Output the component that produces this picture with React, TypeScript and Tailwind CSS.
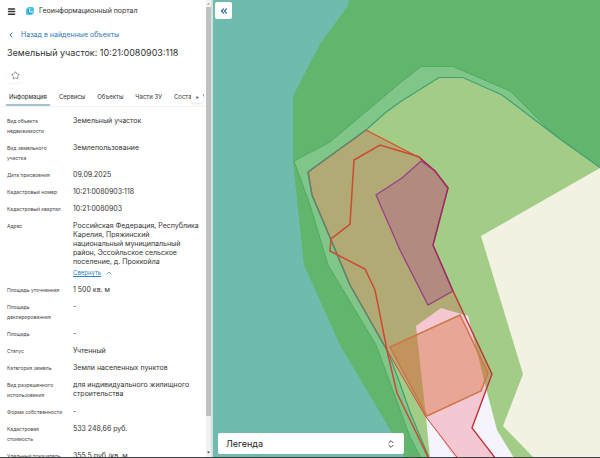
import React from 'react';
import { ChevronLeft, ChevronUp, ChevronsLeft, ChevronsUpDown, Menu, Star } from 'lucide-react';

const tabs = ['Информация', 'Сервисы', 'Объекты', 'Части ЗУ', 'Состав ЗУ'];

type Field = {
  label: string;
  value: string;
  collapsible?: boolean;
};

const fields: Field[] = [
  { label: 'Вид объекта недвижимости', value: 'Земельный участок' },
  { label: 'Вид земельного участка', value: 'Землепользование' },
  { label: 'Дата присвоения', value: '09.09.2025' },
  { label: 'Кадастровый номер', value: '10:21:0080903:118' },
  { label: 'Кадастровый квартал', value: '10:21:0080903' },
  {
    label: 'Адрес',
    value:
      'Российская Федерация, Республика Карелия, Пряжинский национальный муниципальный район, Эссойльское сельское поселение, д. Проккойла',
    collapsible: true,
  },
  { label: 'Площадь уточненная', value: '1 500 кв. м' },
  { label: 'Площадь декларированная', value: '-' },
  { label: 'Площадь', value: '-' },
  { label: 'Статус', value: 'Учтенный' },
  { label: 'Категория земель', value: 'Земли населенных пунктов' },
  { label: 'Вид разрешенного использования', value: 'для индивидуального жилищного строительства' },
  { label: 'Форма собственности', value: '-' },
  { label: 'Кадастровая стоимость', value: '533 248,66 руб.' },
  { label: 'Удельный показатель', value: '355,5 руб./кв. м' },
];

// Portal logo
function Logo() {
  return (
    <svg viewBox="0 0 16 16" className="size-2" aria-hidden="true">
      <path d="M7 0h6a3 3 0 0 1 3 3v5a8 8 0 0 1-8 8H3a3 3 0 0 1-3-3V7a7 7 0 0 1 7-7z" fill="#4fc3e8" />
      <path d="M3 9a5 5 0 0 0 5 5h3a4 4 0 0 0 3-4H7V3a5 5 0 0 0-4 6z" fill="#2b9fd6" />
      <path d="M7 3v7h7" fill="none" stroke="#e6f7fd" strokeWidth="2" />
    </svg>
  );
}

function Header() {
  return (
    <header className="flex h-[22px] items-center px-[7px]">
      <button type="button" aria-label="Меню" className="mr-2.5 text-[#333]">
        <Menu className="size-[9px]" strokeWidth={4} />
      </button>
      <Logo />
      <span className="ml-[5px] text-[7px] whitespace-nowrap">Геоинформационный портал</span>
    </header>
  );
}

function Tabs() {
  return (
    <div className="relative mt-1">
      <nav className="flex gap-1.5 border-b border-[#f0f2f4] px-1.5">
        {tabs.map((tab, i) => (
          <button
            key={tab}
            type="button"
            className={
              i === 0
                ? 'h-[19px] border-b-2 border-[#a8c2d1] px-[3px] pt-0.5 text-[6px] whitespace-nowrap text-[#222]'
                : 'h-[19px] border-b-2 border-transparent px-[3px] pt-0.5 text-[6px] whitespace-nowrap'
            }
          >
            {tab}
          </button>
        ))}
      </nav>
      <button
        type="button"
        aria-label="Следующие вкладки"
        className="absolute top-1 right-[3px] flex size-3 items-center justify-center rounded-sm bg-white shadow-sm"
      >
        <svg viewBox="0 0 4 4" className="size-[3px]" aria-hidden="true">
          <path d="M0.5 0L4 2L0.5 4Z" fill="#3f6f95" />
        </svg>
      </button>
    </div>
  );
}

function FieldRow({ field }: { field: Field }) {
  return (
    <div className="flex">
      <dt className="w-[66px] shrink-0 pr-2 text-[5px] leading-[10px] text-[#444]">{field.label}</dt>
      <dd className="min-w-0 flex-1 pr-1.5 text-[7px] leading-[9px]">
        {field.value}
        {field.collapsible && (
          <button type="button" className="mt-0.5 flex items-center gap-1 text-[6px] leading-[10px] text-[#2b7fc4]">
            <span className="underline">Свернуть</span>
            <ChevronUp className="size-2" />
          </button>
        )}
      </dd>
    </div>
  );
}

function Scrollbar() {
  return (
    <div className="flex w-[5px] shrink-0 flex-col items-center bg-[#f1f1f1]" aria-hidden="true">
      <svg viewBox="0 0 5 7" className="h-[7px] w-[5px]">
        <path d="M1 4.5L2.5 3L4 4.5Z" fill="#999" />
      </svg>
      <div className="w-full grow-[12] bg-[#c1c1c1]" />
      <div className="grow" />
      <svg viewBox="0 0 5 7" className="h-[7px] w-[5px]">
        <path d="M1 1.5L2.5 3.5L4 1.5Z" fill="#444" />
      </svg>
    </div>
  );
}

function MapCanvas() {
  return (
    <svg
      viewBox="213 0 387 458"
      preserveAspectRatio="xMinYMin slice"
      className="absolute inset-0 size-full"
      aria-hidden="true"
    >
      {/* water and forest */}
      <rect x="213" width="387" height="458" fill="#6fbcae" />
      <path d="M349 0H600V458H405L392 433L340 345L304 265L300 228L293 162V96L320 44L347 7Z" fill="#62b56c" />

      {/* shore zone */}
      <path
        d="M602 169L560 139L545 126L510 91L453 66.5H421L400 83L330 142L294 161L310 205L328 265L376 345L392 388L410 437L422 460H602Z"
        fill="#80c689"
        stroke="#4faa62"
      />
      <path
        d="M602 169L560 139L502 95L463 77.5H439L400 102L385 113L366 130L308 172L312 195L326 228L350 285L388 352L398 378L410 412L430 460H602Z"
        fill="#a3cd86"
        stroke="#3f9f74"
        strokeWidth="1.2"
      />

      {/* fields */}
      <path d="M600 168L481 236L523 374L503 426L534 458H600Z" fill="#f1f2e2" />
      <path d="M416 326L441 308L468 316L487 392L497 430L514 458H430L426 417Z" fill="#f5f3fc" />

      {/* land plots */}
      <path
        d="M366 130L420 158L435 171L448 188L433 245L453 291L492 374L472 428L496 459H456L426 417L388 352L350 285L326 228L312 195L308 172Z"
        fill="#ee1e2c"
        fillOpacity="0.2"
      />
      <path
        d="M376 195L402 178L421 161L435 171L448 188L433 245L453 291L428 305L400 250Z"
        fill="#b0409b"
        fillOpacity="0.28"
        stroke="#983f88"
        strokeWidth="1.3"
      />
      <path
        d="M390 347L460 315L488 373L481 391L427 416Z"
        fill="#d7733b"
        fillOpacity="0.4"
        stroke="#cf7547"
        strokeWidth="1.5"
      />

      {/* boundaries */}
      <path
        d="M366 130L308 172L312 195L326 228L350 285L388 352"
        fill="none"
        stroke="#68806b"
        strokeWidth="1.5"
      />
      <path d="M388 352L426 417L460 461" fill="none" stroke="#cf4a3a" />
      <path d="M366 130L420 158L435 171" fill="none" stroke="#d8522f" strokeWidth="1.4" />
      <path
        d="M429 459L397 393L388 355L375 290L365 269L330 251L331 239L350 224L354 160L380 145L420 157"
        fill="none"
        stroke="#cc4932"
        strokeWidth="1.5"
      />
      <path
        d="M420 158L435 171L448 188L433 245L453 291"
        fill="none"
        stroke="#9e2c60"
        strokeWidth="1.4"
      />
      <path d="M453 291L492 374L472 428L496 459" fill="none" stroke="#bd3439" strokeWidth="1.4" />
    </svg>
  );
}

export default function App() {
  return (
    <div className="flex h-screen overflow-hidden border-b border-[#3c4043] font-[Inter,sans-serif] text-[#333]">
      <aside className="flex w-[213px] shrink-0 border-r-2 border-[#d3e3df] bg-white">
        <div className="min-w-0 flex-1 overflow-hidden">
          <Header />
          <a
            href="#results"
            className="mt-[7px] flex items-center gap-1.5 px-[7px] text-[7px] leading-3 text-[#2f78b5]"
          >
            <ChevronLeft className="size-2" strokeWidth={3} />
            Назад в найденные объекты
          </a>
          <h1 className="mt-[5px] px-[7px] text-[9px] leading-[13px] whitespace-nowrap">
            Земельный участок: 10:21:0080903:118
          </h1>
          <button
            type="button"
            aria-label="В избранное"
            className="mt-2 ml-[7px] flex size-4 items-center justify-center rounded-sm bg-white text-[#777] shadow-xs"
          >
            <Star className="size-[9px]" strokeWidth={2} />
          </button>
          <Tabs />
          <dl className="mt-[9px] flex flex-col gap-[7px] pl-[7px]">
            {fields.map((field) => (
              <FieldRow key={field.label} field={field} />
            ))}
          </dl>
        </div>
        <Scrollbar />
      </aside>
      <main className="relative min-w-0 flex-1">
        <MapCanvas />
        <button
          type="button"
          aria-label="Свернуть панель"
          className="absolute top-0.5 left-0.5 flex size-[17px] items-center justify-center rounded-xs bg-white text-[#2f6fa5]"
        >
          <ChevronsLeft className="size-2.5" strokeWidth={3} />
        </button>
        <button
          type="button"
          className="absolute bottom-[3px] left-[5px] flex h-[21px] w-[186px] items-center justify-between rounded-xs bg-white px-2 text-[9px] text-[#222]"
        >
          Легенда
          <ChevronsUpDown className="size-[10px]" />
        </button>
      </main>
    </div>
  );
}
